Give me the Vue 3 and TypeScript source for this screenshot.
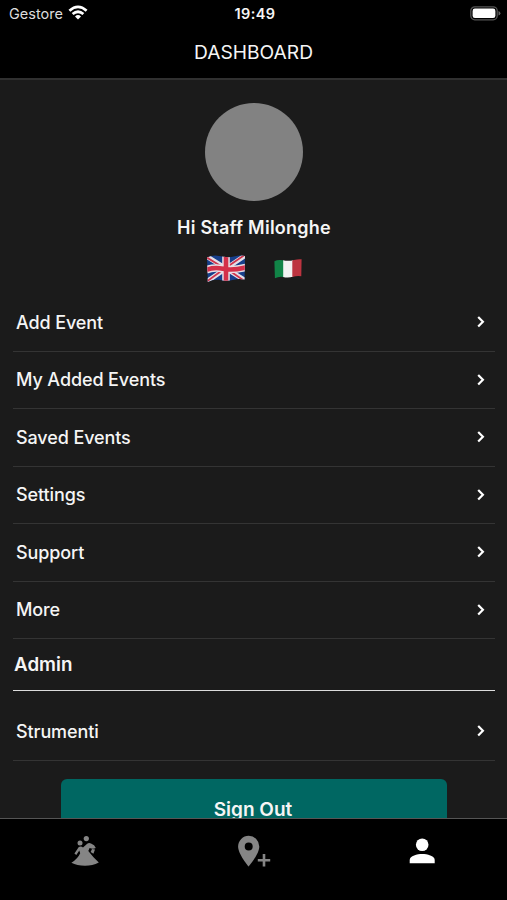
<script setup lang="ts">
interface MenuItem {
  label: string
}

const items: MenuItem[] = [
  { label: 'Add Event' },
  { label: 'My Added Events' },
  { label: 'Saved Events' },
  { label: 'Settings' },
  { label: 'Support' },
  { label: 'More' },
]
const adminItems: MenuItem[] = [{ label: 'Strumenti' }]
</script>

<template>
  <div class="screen">
    <div class="status">
      <div class="carrier">
        <span>Gestore</span>
        <svg class="wifi" width="20" height="15" viewBox="0 0 20 15">
          <g fill="none" stroke="#fff" stroke-width="2.7">
            <path d="M1.4 5.8Q10 -1.9 18.6 5.8" />
            <path d="M4.6 9.1Q10 4.4 15.4 9.1" />
          </g>
          <path d="M7 11.4Q10 8.8 13 11.4L10 14.5Z" fill="#fff" />
        </svg>
      </div>
      <span class="time">19:49</span>
      <svg class="battery" width="31" height="15" viewBox="0 0 31 15">
        <rect x="0.8" y="0.8" width="26.4" height="13" rx="4" fill="none" stroke="#555" stroke-width="1.3" />
        <rect x="2.6" y="2.6" width="22.8" height="9.4" rx="2.3" fill="#fff" />
        <path d="M28.5 5Q30.4 5.7 30.4 7.3Q30.4 8.9 28.5 9.6Z" fill="#666" />
      </svg>
    </div>
    <header class="title"><h1>DASHBOARD</h1></header>

    <main class="content">
      <div class="avatar"></div>
      <p class="greeting">Hi Staff Milonghe</p>
      <div class="flags">
        <svg class="uk" width="40" height="30" viewBox="0 0 40 30">
          <defs>
            <clipPath id="ukShape">
              <path d="M1 3.4Q7 .8 13 2Q22 4.1 28 2.4Q34 .9 39 1.9L38.6 25.6Q33 24.4 28 25.8Q20 27.7 13 25.8Q7 25 1.8 28Z" />
            </clipPath>
          </defs>
          <g clip-path="url(#ukShape)" fill="none">
            <rect width="40" height="30" fill="#173f8b" />
            <path d="M0 2L40 27M0 28L40 1" stroke="#e4dfe6" stroke-width="4.8" />
            <path d="M0 3L18 14M21 15L40 28M0 28L18 15M21 13L40 0" stroke="#d0354d" stroke-width="1.8" />
            <path d="M20 0V30M0 16Q8 12.8 17 14.8T40 13.4" stroke="#eadfe4" stroke-width="7.6" />
            <path d="M20 0V30M0 16Q8 12.8 17 14.8T40 13.4" stroke="#d4304a" stroke-width="4.6" />
          </g>
        </svg>
        <svg class="italy" width="28" height="22" viewBox="0 0 28 22">
          <defs>
            <clipPath id="itShape">
              <path d="M.4 3.2Q4 1.3 9 2.3Q15 3.5 20 1.9Q24 .9 27.6 1.3L27.3 18.2Q23 17.6 19 18.7Q14 20.1 9 18.9Q5 18.1 .9 20.2Z" />
            </clipPath>
          </defs>
          <g clip-path="url(#itShape)">
            <rect width="10" height="22" fill="#118447" />
            <rect x="9.2" width="10" height="22" fill="#f2f2f2" />
            <rect x="18.3" width="10" height="22" fill="#bd3440" />
          </g>
        </svg>
      </div>

      <nav class="menu">
        <a v-for="item in items" :key="item.label" class="row">
          <span>{{ item.label }}</span>
          <svg class="chevron" width="10" height="14" viewBox="0 0 10 14"><path d="M2.2 2L6.9 6.8L2.2 11.6" /></svg>
        </a>
      </nav>
      <h2 class="section">Admin</h2>
      <nav class="menu admin">
        <a v-for="item in adminItems" :key="item.label" class="row">
          <span>{{ item.label }}</span>
          <svg class="chevron" width="10" height="14" viewBox="0 0 10 14"><path d="M2.2 2L6.9 6.8L2.2 11.6" /></svg>
        </a>
      </nav>
      <button class="signout">Sign Out</button>
    </main>

    <footer class="tabs">
      <a class="tab">
        <svg width="30" height="34" viewBox="0 0 30 34" fill="#858585">
          <circle cx="16.3" cy="4.6" r="2.6" />
          <circle cx="10" cy="9" r="2.5" />
          <path d="M8.8 12.9Q11.4 12 13 13.6L17.2 9.8Q19 8.4 21 9.6Q24.8 10.9 25.8 14Q23 15.4 19.6 14L18.3 17Q22.8 23 28.8 28.5Q22.5 31.8 15 31.8Q7 31.8 1.4 28.8Q7.8 24.6 10.2 19.2L9.3 16.6L6.3 20.9L4.4 19.4Z" />
          <path d="M22 15L25 15.5L23.4 19.7L20.6 18.1Z" />
        </svg>
      </a>
      <a class="tab">
        <svg width="34" height="34" viewBox="0 0 34 34">
          <path fill="#858585" fill-rule="evenodd" d="M11.7 1.8A10.6 10.6 0 0 0 1.1 12.4C1.1 20.2 11.7 32.5 11.7 32.5S22.3 20.2 22.3 12.4A10.6 10.6 0 0 0 11.7 1.8ZM11.7 8.5A4 4 0 1 1 11.7 16.5A4 4 0 1 1 11.7 8.5Z" />
          <path d="M27 20V32.4M20.8 26.2H33.2" fill="none" stroke="#858585" stroke-width="2.6" />
        </svg>
      </a>
      <a class="tab">
        <svg width="34" height="34" viewBox="0 0 34 34" fill="#fff">
          <circle cx="16.2" cy="10.8" r="6.3" />
          <path d="M3.7 29.2V26C3.7 21.9 11.3 20 16.2 20S28.7 21.9 28.7 26V29.2Z" />
        </svg>
      </a>
    </footer>
  </div>
</template>

<style>
body {
  background: #000;
}
</style>

<style scoped>
.screen {
  height: 900px;
  display: flex;
  flex-direction: column;
  overflow: hidden;
  background: #000;
  color: #f5f5f5;
  font-family: Inter, "Liberation Sans", sans-serif;
}
.status {
  height: 27px;
  flex: none;
  display: grid;
  grid-template-columns: 1fr auto 1fr;
  align-items: center;
  padding: 0 6px 0 9px;
  font-size: 14.5px;
}
.carrier {
  display: flex;
  align-items: center;
  gap: 5px;
  color: #ddd;
}
.wifi {
  margin-top: -2px;
}
.time {
  font-weight: 600;
  font-size: 14.5px;
  letter-spacing: 0.4px;
}
.battery {
  justify-self: end;
}
.title {
  box-sizing: border-box;
  flex: none;
  height: 53px;
  padding-bottom: 2px;
  display: flex;
  justify-content: center;
  align-items: center;
  border-bottom: 2px solid #303030;
}
h1 {
  margin: 0;
  font-size: 19.2px;
  font-weight: 400;
}
.content {
  flex: 1;
  min-height: 0;
  overflow: hidden;
  background: #1b1b1b;
  padding: 23px 12px 0 13px;
  display: flex;
  flex-direction: column;
}
.avatar {
  flex: none;
  width: 98px;
  height: 98px;
  border-radius: 50%;
  background: #828282;
  align-self: center;
}
.greeting {
  flex: none;
  margin: 15px 0 0;
  line-height: 24px;
  text-align: center;
  font-size: 18px;
  font-weight: 600;
  letter-spacing: 0.24px;
}
.flags {
  flex: none;
  box-sizing: border-box;
  height: 54px;
  display: flex;
  justify-content: center;
  align-items: center;
  gap: 28px;
  padding: 4px 1px 0 0;
}
.menu {
  flex: none;
}
.row {
  box-sizing: border-box;
  height: 57.5px;
  display: flex;
  align-items: center;
  justify-content: space-between;
  padding: 0 9px 0 3px;
  border-bottom: 1px solid #343434;
  font-size: 18px;
  font-weight: 500;
  letter-spacing: -0.11px;
}
.chevron path {
  fill: none;
  stroke: #fff;
  stroke-width: 2.2;
}
.section {
  flex: none;
  box-sizing: border-box;
  height: 52px;
  margin: 0;
  padding-left: 1px;
  line-height: 52px;
  border-bottom: 1.5px solid #ddd;
  font-size: 18.8px;
  font-weight: 600;
}
.admin {
  padding-top: 12px;
}
.signout {
  flex: none;
  align-self: center;
  width: 386px;
  height: 61px;
  margin-top: 18px;
  padding: 1px 2px 0 0;
  border: 0;
  border-radius: 6px;
  background: #006762;
  color: #f5f5f5;
  font: 600 19px Inter, "Liberation Sans", sans-serif;
}
.tabs {
  flex: none;
  box-sizing: border-box;
  height: 82px;
  border-top: 1px solid #555;
  display: grid;
  grid-template-columns: repeat(3, 1fr);
  padding-top: 15px;
}
.tab {
  display: flex;
  justify-content: center;
}
</style>
